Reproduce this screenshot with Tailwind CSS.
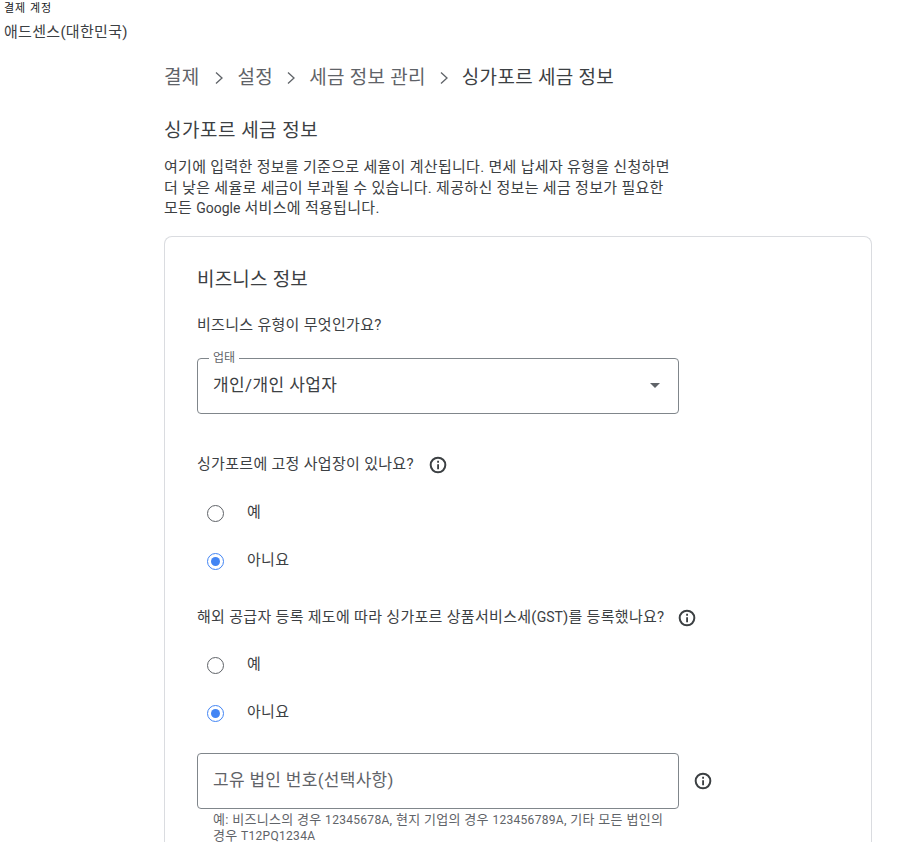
<!DOCTYPE html>
<html lang="ko">
<head>
<meta charset="UTF-8" />
<script src="https://cdn.jsdelivr.net/npm/@tailwindcss/browser@4"></script>
<title>싱가포르 세금 정보</title>
</head>
<body class="bg-white h-[842px] overflow-hidden font-['Roboto','Noto_Sans_CJK_KR',sans-serif] text-[#3c4043]">
  <div class="pl-[4px] pt-[2px]">
    <p class="text-[11px] leading-[14px] tracking-[1px] text-[#202124]">결제 계정</p>
    <p class="text-[15px] leading-[20px] tracking-[0.3px] mt-[6px]">애드센스(대한민국)</p>
  </div>

  <main class="ml-[164px] w-[708px]">
    <nav class="flex items-center mt-[22px] h-[28px] text-[19px] tracking-[0.3px] text-[#5f6368]">
      <span>결제</span>
      <svg class="w-[12px] h-[14px] mx-[13px]" viewBox="0 0 12 14" fill="none" stroke="#5f6368" stroke-width="1.3"><path d="M3 1.5 9 7l-6 5.5"/></svg>
      <span>설정</span>
      <svg class="w-[12px] h-[14px] mx-[12px]" viewBox="0 0 12 14" fill="none" stroke="#5f6368" stroke-width="1.3"><path d="M3 1.5 9 7l-6 5.5"/></svg>
      <span>세금 정보 관리</span>
      <svg class="w-[12px] h-[14px] mx-[12px]" viewBox="0 0 12 14" fill="none" stroke="#5f6368" stroke-width="1.3"><path d="M3 1.5 9 7l-6 5.5"/></svg>
      <span class="text-[#3c4043]">싱가포르 세금 정보</span>
    </nav>

    <h1 class="text-[19px] tracking-[0.5px] leading-[26px] mt-[26px] text-[#3c4043]">싱가포르 세금 정보</h1>
    <p class="text-[15px] tracking-[0.3px] leading-[20.5px] mt-[13px] whitespace-nowrap">여기에 입력한 정보를 기준으로 세율이 계산됩니다. 면세 납세자 유형을 신청하면<br>더 낮은 세율로 세금이 부과될 수 있습니다. 제공하신 정보는 세금 정보가 필요한<br>모든 <span class="text-[14px] tracking-normal">Google</span> 서비스에 적용됩니다.</p>

    <!-- card continues below the fold, so no bottom edge here -->
    <section class="mt-[17px] border border-b-0 border-[#dadce0] rounded-t-[8px] pl-[32px] pt-[30px]">
      <h2 class="text-[19px] tracking-[0.2px] leading-[26px] text-[#3c4043]">비즈니스 정보</h2>
      <p class="text-[15px] tracking-[0.3px] leading-[20px] mt-[22px]">비즈니스 유형이 무엇인가요?</p>

      <div class="relative mt-[23px] w-[482px] h-[56px] border border-[#80868b] rounded-[4px] flex items-center justify-between pl-[15px] pr-[18px]">
        <span class="absolute -top-[8px] left-[11px] bg-white px-[4px] text-[12px] leading-[14px] text-[#5f6368]">업태</span>
        <span class="text-[17px] tracking-[0.4px]">개인/개인 사업자</span>
        <span class="w-0 h-0 border-x-[5px] border-x-transparent border-t-[5px] border-t-[#5f6368]"></span>
      </div>

      <div class="flex items-center gap-[14px] mt-[39px] h-[24px]">
        <p class="text-[15px] tracking-[0.3px]">싱가포르에 고정 사업장이 있나요?</p>
        <svg class="w-[20px] h-[20px]" viewBox="0 0 24 24" fill="#3c4043"><path fill-rule="evenodd" d="M11 7h2.2v2.2H11zm0 4h2.2v6H11zm1-9a10 10 0 1 0 0 20 10 10 0 0 0 0-20zm0 17.6a7.6 7.6 0 1 1 0-15.2 7.6 7.6 0 0 1 0 15.2z"/></svg>
      </div>
      <div class="flex items-center mt-[13px] h-[48px] pl-[10px] gap-[23px]">
        <span class="w-[17px] h-[17px] rounded-full border-[1.5px] border-[#5f6368]"></span>
        <span class="text-[15px] tracking-[0.3px] -mt-[3px]">예</span>
      </div>
      <div class="flex items-center h-[48px] pl-[10px] gap-[23px]">
        <span class="w-[17px] h-[17px] rounded-full border-[1.5px] border-[#4285f4] flex items-center justify-center"><span class="w-[9px] h-[9px] rounded-full bg-[#4285f4]"></span></span>
        <span class="text-[15px] tracking-[0.3px] -mt-[3px]">아니요</span>
      </div>

      <div class="flex items-center gap-[12px] mt-[20px] h-[24px]">
        <p class="text-[15px] tracking-[0.3px]">해외 공급자 등록 제도에 따라 싱가포르 상품서비스세(<span class="text-[14px] tracking-normal">GST</span>)를 등록했나요?</p>
        <svg class="w-[20px] h-[20px]" viewBox="0 0 24 24" fill="#3c4043"><path fill-rule="evenodd" d="M11 7h2.2v2.2H11zm0 4h2.2v6H11zm1-9a10 10 0 1 0 0 20 10 10 0 0 0 0-20zm0 17.6a7.6 7.6 0 1 1 0-15.2 7.6 7.6 0 0 1 0 15.2z"/></svg>
      </div>
      <div class="flex items-center mt-[12px] h-[48px] pl-[10px] gap-[23px]">
        <span class="w-[17px] h-[17px] rounded-full border-[1.5px] border-[#5f6368]"></span>
        <span class="text-[15px] tracking-[0.3px] -mt-[3px]">예</span>
      </div>
      <div class="flex items-center h-[48px] pl-[10px] gap-[23px]">
        <span class="w-[17px] h-[17px] rounded-full border-[1.5px] border-[#4285f4] flex items-center justify-center"><span class="w-[9px] h-[9px] rounded-full bg-[#4285f4]"></span></span>
        <span class="text-[15px] tracking-[0.3px] -mt-[3px]">아니요</span>
      </div>

      <div class="flex items-center gap-[14px] mt-[15px]">
        <div class="w-[482px] h-[56px] border border-[#80868b] rounded-[4px] flex items-center pl-[15px] text-[17px] tracking-[0.3px] text-[#5f6368]">고유 법인 번호(선택사항)</div>
        <svg class="w-[20px] h-[20px]" viewBox="0 0 24 24" fill="#3c4043"><path fill-rule="evenodd" d="M11 7h2.2v2.2H11zm0 4h2.2v6H11zm1-9a10 10 0 1 0 0 20 10 10 0 0 0 0-20zm0 17.6a7.6 7.6 0 1 1 0-15.2 7.6 7.6 0 0 1 0 15.2z"/></svg>
      </div>
      <p class="text-[13px] tracking-[0.3px] leading-[15px] mt-[3px] ml-[16px] whitespace-nowrap text-[#5f6368]">예: 비즈니스의 경우 <span class="text-[12px]">12345678A</span>, 현지 기업의 경우 <span class="text-[12px]">123456789A</span>, 기타 모든 법인의<br>경우 <span class="text-[12px]">T12PQ1234A</span></p>
    </section>
  </main>
</body>
</html>
